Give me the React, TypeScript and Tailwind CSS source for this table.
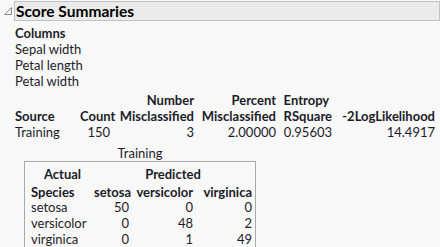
import React from "react";

const font = { fontFamily: 'Lato, "Open Sans", sans-serif' };

function Disclosure() {
  return (
    <svg width="10" height="10" viewBox="0 0 10 10" className="shrink-0">
      <path d="M8.5 1.5 L8.5 8.5 L1.5 8.5 Z" fill="none" stroke="#8a8a8a" strokeWidth="1" />
    </svg>
  );
}

const summary = [
  { src: "Training", count: "150", nm: "3", pm: "2.00000", er: "0.95603", ll: "14.4917" },
];

const matrix = [
  { sp: "setosa", a: "50", b: "0", c: "0" },
  { sp: "versicolor", a: "0", b: "48", c: "2" },
  { sp: "virginica", a: "0", b: "1", c: "49" },
];

export default function App() {
  return (
    <div
      className="w-[440px] h-[247px] overflow-hidden bg-[#f8f8f8] text-[#1c1c28] text-[13px] leading-[16px]"
      style={font}
    >
      <div className="flex items-center pt-[1px]">
        <div className="w-[14px] flex justify-center pl-[2px]">
          <Disclosure />
        </div>
        <div className="flex-1 h-[20px] bg-[#ebebeb] border border-[#c2c2c2] flex items-center pl-[1px]">
          <span className="font-bold text-[15.5px] leading-[18px] text-black">Score Summaries</span>
        </div>
      </div>

      <div className="pl-[15px] pt-[4px]">
        <div className="font-bold">Columns</div>
        <div>Sepal width</div>
        <div>Petal length</div>
        <div>Petal width</div>
      </div>

      <div className="pl-[15px] pt-[3px] grid grid-cols-[65px_30px_84px_82px_56px_103px]">
        <div className="font-bold self-end">Source</div>
        <div className="font-bold self-end text-right">Count</div>
        <div className="font-bold text-right">Number<br />Misclassified</div>
        <div className="font-bold text-right">Percent<br />Misclassified</div>
        <div className="font-bold text-right">
          <span className="inline-block text-left">Entropy<br />RSquare</span>
        </div>
        <div className="font-bold self-end text-right">-2LogLikelihood</div>
        {summary.map((r) => (
          <React.Fragment key={r.src}>
            <div>{r.src}</div>
            <div className="text-right">{r.count}</div>
            <div className="text-right">{r.nm}</div>
            <div className="text-right">{r.pm}</div>
            <div className="text-right">{r.er}</div>
            <div className="text-right">{r.ll}</div>
          </React.Fragment>
        ))}
      </div>

      <div className="pl-[24px] pt-[5px] w-[256px]">
        <div className="text-center">Training</div>
        <div className="border border-[#a9a9a9] border-b-0 h-[100px] pl-[6px] pr-[4px] pt-[4px]">
          <div className="grid grid-cols-[63px_35px_64px_59px]">
            <div className="font-bold text-center pb-[3px]">Actual</div>
            <div className="col-span-3 font-bold text-center">Predicted</div>
            <div className="font-bold leading-[14px]">Species</div>
            <div className="font-bold text-right leading-[14px]">setosa</div>
            <div className="font-bold text-right leading-[14px]">versicolor</div>
            <div className="font-bold text-right leading-[14px]">virginica</div>
            {matrix.map((r) => (
              <React.Fragment key={r.sp}>
                <div>{r.sp}</div>
                <div className="text-right">{r.a}</div>
                <div className="text-right">{r.b}</div>
                <div className="text-right">{r.c}</div>
              </React.Fragment>
            ))}
          </div>
        </div>
      </div>
    </div>
  );
}
